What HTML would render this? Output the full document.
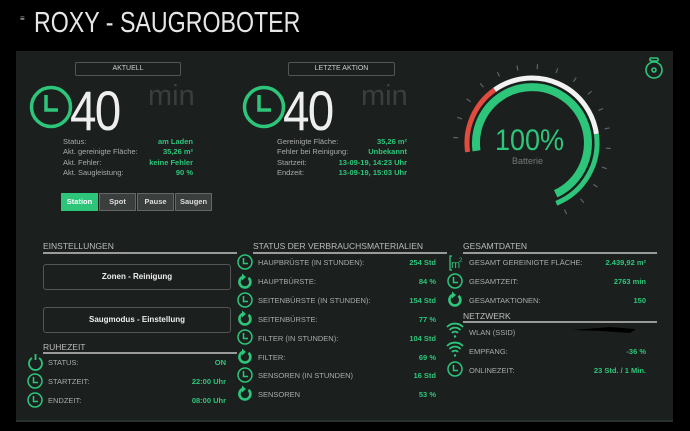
<!DOCTYPE html>
<html><head><meta charset="utf-8"><style>
*{margin:0;padding:0;box-sizing:border-box}
body{width:690px;height:431px;background:#000;font-family:"Liberation Sans",sans-serif;position:relative;overflow:hidden;color:#bbb}
.a{position:absolute;white-space:nowrap}
.panel{position:absolute;left:16px;top:51px;width:657px;height:371px;background:#1b201e;border-bottom:2px solid #2a302d}
.lbl{font-size:7.5px;color:#aaa}
.val{font-size:7.5px;color:#2dc57a;font-weight:bold;text-align:right}
.sec{font-size:8.5px;color:#bbb}
.line{position:absolute;height:2px;background:#9a9a9a}
.tbtn{position:absolute;border:1px solid #555;border-radius:2px;font-size:7px;color:#ccc;text-align:center;line-height:12px}
.big{font-size:56px;color:#eee;font-weight:normal;letter-spacing:-2px;transform:scaleX(0.85);transform-origin:0 0}
.min{font-size:29px;color:#3a3e3c}
.bb{position:absolute;top:193px;height:18px;width:37px;background:#3a3e3c;border:1px solid #666;font-size:7.5px;color:#ddd;font-weight:bold;text-align:center;line-height:16px}
.wb{position:absolute;left:43px;width:188px;height:26px;border:1px solid #555;border-radius:3px;font-size:8px;color:#eee;font-weight:bold;text-align:center;line-height:24px}
</style></head><body>
<div class="a" style="left:20px;top:14px;font-size:8px;color:#ccc">≡</div>
<div class="a" style="left:34px;top:7px;font-size:29px;color:#e6e6e6;transform:scaleX(0.8);transform-origin:0 0">ROXY - SAUGROBOTER</div>
<div class="panel"></div>

<svg class="a" style="left:0;top:0" width="690" height="431">
<defs>
<g id="clk"><circle cx="0" cy="0" r="7" fill="none" stroke="#2dc57a" stroke-width="1.5"/><path d="M-1.5 -4V1.5H3" fill="none" stroke="#2dc57a" stroke-width="1.5"/></g>
<g id="ref"><path d="M3.5 -4.2A5.5 5.5 0 1 1 -2 -5.2" fill="none" stroke="#2dc57a" stroke-width="2.6"/><path d="M-3 -8.5L1 -5L-3 -1.5Z" fill="#2dc57a"/></g>
<g id="wifi" fill="none" stroke="#2dc57a" stroke-width="1.8"><path d="M-8 -3A11 11 0 0 1 8 -3"/><path d="M-5.5 0A7.5 7.5 0 0 1 5.5 0"/><path d="M-3 3A4 4 0 0 1 3 3"/><circle cx="0" cy="6.5" r="1.2" fill="#2dc57a" stroke="none"/></g>
<line id="tk" x1="-74" y1="0" x2="-79" y2="0" stroke="#5a646c" stroke-width="1.2"/>
</defs>
<g fill="none" stroke="#2dc57a" stroke-width="3.5"><circle cx="51" cy="107" r="19.5"/><path d="M46 95V110H58"/>
<circle cx="264" cy="107" r="19.5"/><path d="M259 95V110H271"/></g>
<g fill="none">
<path d="M476.5 150.8 A56 56 0 1 1 555.7 193.8" stroke="#2dc57a" stroke-width="8"/>
<path d="M467.6 152 A65 65 0 0 1 494.7 89.8" stroke="#e24c3f" stroke-width="5"/>
<path d="M494.7 89.8 A65 65 0 0 1 596.4 134" stroke="#f2f2f2" stroke-width="5"/>
<path d="M596.4 134 A65 65 0 0 1 556.3 203.3" stroke="#2dc57a" stroke-width="5"/>
</g>
<g transform="translate(532,143)">
<use href="#tk" transform="rotate(4)"/><use href="#tk" transform="rotate(19)"/><use href="#tk" transform="rotate(34)"/><use href="#tk" transform="rotate(49)"/><use href="#tk" transform="rotate(64)"/><use href="#tk" transform="rotate(79)"/><use href="#tk" transform="rotate(94)"/><use href="#tk" transform="rotate(109)"/><use href="#tk" transform="rotate(124)"/><use href="#tk" transform="rotate(139)"/><use href="#tk" transform="rotate(154)"/><use href="#tk" transform="rotate(169)"/><use href="#tk" transform="rotate(184)"/><use href="#tk" transform="rotate(199)"/><use href="#tk" transform="rotate(214)"/><use href="#tk" transform="rotate(229)"/><use href="#tk" transform="rotate(244)"/>
</g>
<g fill="none" stroke="#2dc57a" stroke-width="1.6"><circle cx="654" cy="70" r="8"/><circle cx="654" cy="70" r="2"/><rect x="650" y="58" width="8" height="3" rx="1"/></g>
<use href="#clk" x="245" y="262"/><use href="#ref" x="245" y="282"/><use href="#clk" x="245" y="300"/><use href="#ref" x="245" y="319"/>
<use href="#clk" x="245" y="337"/><use href="#ref" x="245" y="357"/><use href="#clk" x="245" y="375"/><use href="#ref" x="245" y="394"/>
<g fill="none" stroke="#2dc57a" stroke-width="1.8"><path d="M32 358A6.5 6.5 0 1 0 39 358"/><path d="M35.5 354v6"/></g>
<use href="#clk" x="35" y="381"/><use href="#clk" x="35" y="400"/>
<g stroke="#2dc57a" fill="none" stroke-width="1.3"><path d="M452 256h-2v14h2"/></g>
<text x="451" y="268" font-family="Liberation Sans" font-size="11" fill="#2dc57a">m</text>
<text x="459" y="262" font-family="Liberation Sans" font-size="6" fill="#2dc57a">2</text>
<use href="#clk" x="455" y="281"/><use href="#ref" x="455" y="300"/>
<use href="#wifi" x="455" y="330"/><use href="#wifi" x="455" y="349"/><use href="#clk" x="455" y="369"/>
<path d="M572 330 L600 331 L630 333 L636 329 L610 327 Z" fill="#000"/>
</svg>

<div class="tbtn" style="left:75px;top:62px;width:106px;height:14px">AKTUELL</div>
<div class="tbtn" style="left:288px;top:62px;width:107px;height:14px">LETZTE AKTION</div>
<div class="a big" style="left:70px;top:78px">40</div>
<div class="a min" style="left:148px;top:80px">min</div>
<div class="a big" style="left:283px;top:78px">40</div>
<div class="a min" style="left:361px;top:80px">min</div>

<div class="a lbl" style="left:63px;top:137px;line-height:10.3px">Status:<br>Akt. gereinigte Fläche:<br>Akt. Fehler:<br>Akt. Saugleistung:</div>
<div class="a val" style="right:497px;top:137px;line-height:10.3px">am Laden<br>35,26 m²<br>keine Fehler<br>90 %</div>
<div class="a lbl" style="left:277px;top:137px;line-height:10.3px">Gereinigte Fläche:<br>Fehler bei Reinigung:<br>Startzeit:<br>Endzeit:</div>
<div class="a val" style="right:283px;top:137px;line-height:10.3px">35,26 m²<br>Unbekannt<br>13-09-19, 14:23 Uhr<br>13-09-19, 15:03 Uhr</div>

<div class="bb" style="left:61px;background:#2dc57a;border-color:#2dc57a;color:#fff">Station</div>
<div class="bb" style="left:99px">Spot</div>
<div class="bb" style="left:137px">Pause</div>
<div class="bb" style="left:175px">Saugen</div>

<div class="a" style="left:495px;top:124px;font-size:30px;color:#2dc57a;transform:scaleX(0.9);transform-origin:0 0">100%</div>
<div class="a" style="left:512px;top:156px;font-size:9px;color:#777">Batterie</div>

<div class="a sec" style="left:43px;top:241px">EINSTELLUNGEN</div><div class="line" style="left:43px;top:252px;width:194px"></div>
<div class="wb" style="top:264px">Zonen - Reinigung</div>
<div class="wb" style="top:307px">Saugmodus - Einstellung</div>
<div class="a sec" style="left:43px;top:342px">RUHEZEIT</div><div class="line" style="left:43px;top:352px;width:194px"></div>
<div class="a lbl" style="left:48px;top:353px;line-height:19px">STATUS:<br>STARTZEIT:<br>ENDZEIT:</div>
<div class="a val" style="right:464px;top:353px;line-height:19px">ON<br>22:00 Uhr<br>08:00 Uhr</div>

<div class="a sec" style="left:253px;top:241px">STATUS DER VERBRAUCHSMATERIALIEN</div><div class="line" style="left:253px;top:252px;width:194px"></div>
<div class="a lbl" style="left:258px;top:254px;line-height:18.9px">HAUPBRÜSTE (IN STUNDEN):<br>HAUPTBÜRSTE:<br>SEITENBÜRSTE (IN STUNDEN):<br>SEITENBÜRSTE:<br>FILTER (IN STUNDEN):<br>FILTER:<br>SENSOREN (IN STUNDEN)<br>SENSOREN</div>
<div class="a val" style="right:254px;top:254px;line-height:18.9px">254 Std<br>84 %<br>154 Std<br>77 %<br>104 Std<br>69 %<br>16 Std<br>53 %</div>

<div class="a sec" style="left:463px;top:241px">GESAMTDATEN</div><div class="line" style="left:463px;top:252px;width:194px"></div>
<div class="a lbl" style="left:469px;top:254px;line-height:18.9px">GESAMT GEREINIGTE FLÄCHE:<br>GESAMTZEIT:<br>GESAMTAKTIONEN:</div>
<div class="a val" style="right:44px;top:254px;line-height:18.9px">2.439,92 m²<br>2763 min<br>150</div>
<div class="a sec" style="left:463px;top:311px">NETZWERK</div><div class="line" style="left:463px;top:321px;width:194px"></div>
<div class="a lbl" style="left:469px;top:324px;line-height:18.9px">WLAN (SSID)<br>EMPFANG:<br>ONLINEZEIT:</div>
<div class="a val" style="right:44px;top:324px;line-height:18.9px"><span style="opacity:0">x</span><br>-36 %<br>23 Std. / 1 Min.</div>
</body></html>
